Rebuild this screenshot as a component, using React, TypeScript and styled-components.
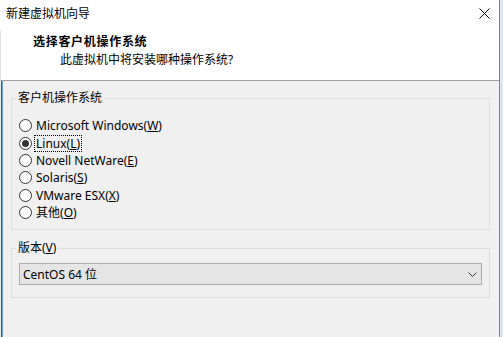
import styled, { createGlobalStyle } from "styled-components";

const GlobalStyles = createGlobalStyle`
  html, body {
    margin: 0;
    padding: 0;
  }
  body {
    font-family: "Segoe UI", "Noto Sans", "Noto Sans CJK SC", sans-serif;
    font-size: 12px;
    color: #000;
  }
`;

const Screen = styled.div`
  display: flex;
  width: 503px;
  height: 337px;
  background: #dbe6f1;
  overflow: hidden;
`;

const Window = styled.div`
  width: 499px;
  display: flex;
  flex-direction: column;
  background: #fff;
  border-right: 1px solid #4a92dc;
`;

const TitleBar = styled.div`
  height: 30px;
  display: flex;
  align-items: center;
  justify-content: space-between;
  padding: 0 9px 3px 6px;
  box-sizing: border-box;
`;

const Title = styled.span`
  font-size: 12px;
  line-height: 16px;
`;

const CloseIcon = () => (
  <svg width="11" height="11" viewBox="0 0 11 11">
    <path d="M0.5 0.5 L10.5 10.5 M10.5 0.5 L0.5 10.5" stroke="#000" strokeWidth="1" />
  </svg>
);

const Header = styled.div`
  height: 51px;
  box-sizing: border-box;
  padding: 3px 0 0 32px;
  border-bottom: 1px solid #a0a0a0;
  border-left: 1px solid #e3e3e3;
`;

const HeaderTitle = styled.div`
  font-weight: bold;
  letter-spacing: 0.7px;
  line-height: 18px;
`;

const HeaderSub = styled.div`
  padding-left: 27px;
  line-height: 18px;
`;

const Body = styled.div`
  flex: 1;
  background: #f0f0f0;
  padding: 9px 9px 0 11px;
  box-shadow: inset 1px 0 0 #e8eef2, inset 2px 0 0 #2c5d77, inset 3px 0 0 #6fa6c6;
`;

const Group = styled.fieldset<{ $bottom: number }>`
  margin: 0 0 10px 0;
  padding: 0 7px ${(p) => p.$bottom}px 7px;
  border: 1px solid #dcdcdc;
  min-width: 0;
`;

const Legend = styled.legend`
  padding: 0 2px;
  margin-left: -3px;
  line-height: 16px;
`;

const RadioList = styled.div`
  display: flex;
  flex-direction: column;
  padding-top: 11px;
`;

const RadioRow = styled.label`
  display: flex;
  align-items: center;
  gap: 3px;
  height: 17.4px;
`;

const Circle = styled.span<{ $on: boolean }>`
  width: 11px;
  height: 11px;
  border: 1px solid #333;
  border-radius: 50%;
  background: #fff;
  display: flex;
  align-items: center;
  justify-content: center;
  flex-shrink: 0;
  &::after {
    content: "";
    display: ${(p) => (p.$on ? "block" : "none")};
    width: 7px;
    height: 7px;
    border-radius: 50%;
    background: #333;
  }
`;

const RadioText = styled.span<{ $focus: boolean }>`
  line-height: 15px;
  padding: 0 1px;
  outline: ${(p) => (p.$focus ? "1px dotted #000" : "none")};
  outline-offset: 0;
`;

const Combo = styled.div`
  margin-top: 7px;
  height: 22px;
  box-sizing: border-box;
  border: 1px solid #adadad;
  background: #e5e5e5;
  display: flex;
  align-items: center;
  justify-content: space-between;
  padding: 0 4px 0 3px;
`;

const Chevron = () => (
  <svg width="9" height="5" viewBox="0 0 9 5">
    <path d="M0.5 0.5 L4.5 4.5 L8.5 0.5" fill="none" stroke="#333" strokeWidth="1" />
  </svg>
);

const systems = [
  { name: "Microsoft Windows", key: "W" },
  { name: "Linux", key: "L" },
  { name: "Novell NetWare", key: "E" },
  { name: "Solaris", key: "S" },
  { name: "VMware ESX", key: "X" },
  { name: "其他", key: "O" },
];

export default function App() {
  const selected = "Linux";

  return (
    <Screen>
      <GlobalStyles />
      <Window>
        <TitleBar>
          <Title>新建虚拟机向导</Title>
          <CloseIcon />
        </TitleBar>
        <Header>
          <HeaderTitle>选择客户机操作系统</HeaderTitle>
          <HeaderSub>此虚拟机中将安装哪种操作系统?</HeaderSub>
        </Header>
        <Body>
          <Group $bottom={8}>
            <Legend>客户机操作系统</Legend>
            <RadioList>
              {systems.map((s) => (
                <RadioRow key={s.key}>
                  <Circle $on={s.name === selected} />
                  <RadioText $focus={s.name === selected}>
                    {s.name}(<u>{s.key}</u>)
                  </RadioText>
                </RadioRow>
              ))}
            </RadioList>
          </Group>
          <Group $bottom={12}>
            <Legend>
              版本(<u>V</u>)
            </Legend>
            <Combo>
              <span>CentOS 64 位</span>
              <Chevron />
            </Combo>
          </Group>
        </Body>
      </Window>
    </Screen>
  );
}
